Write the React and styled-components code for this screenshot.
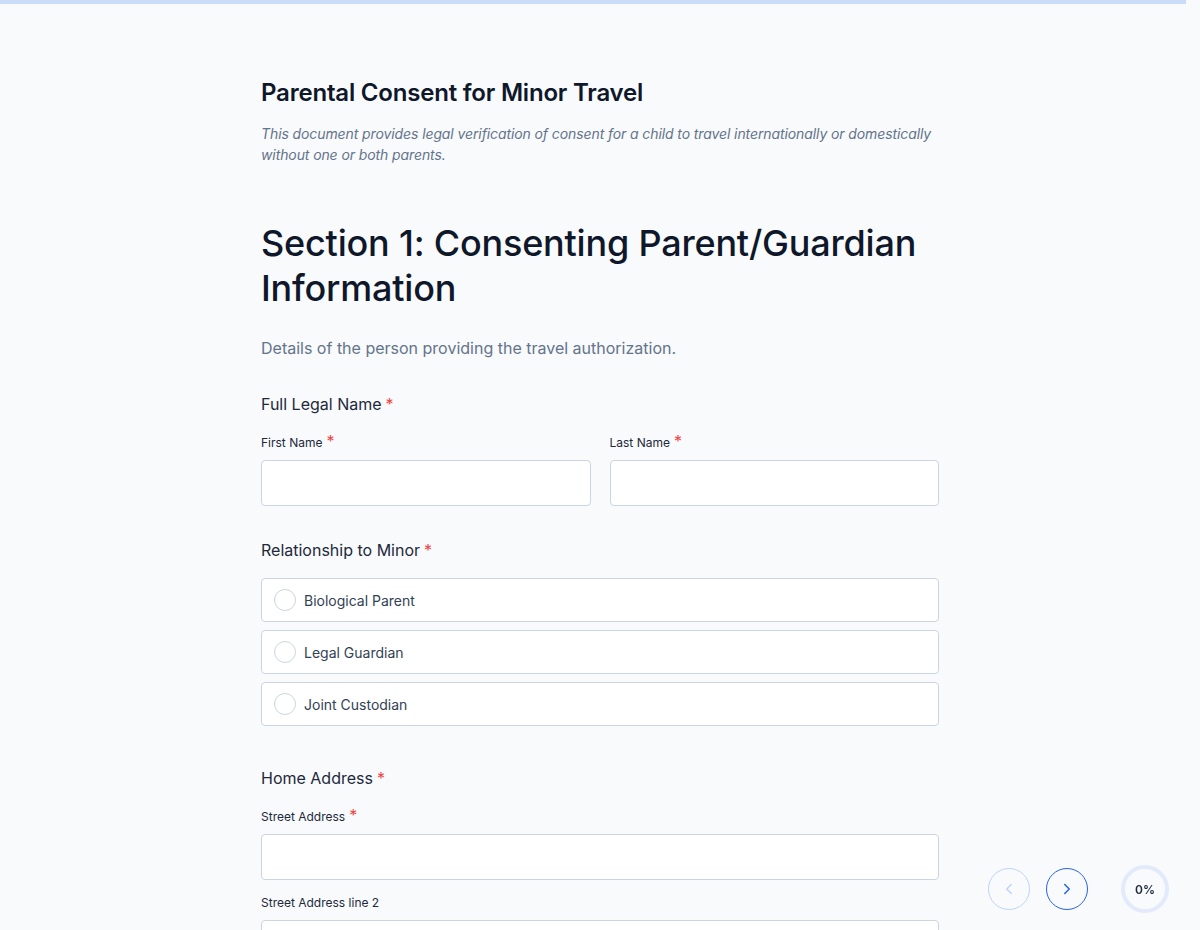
import React from 'react';
import styled, { createGlobalStyle } from 'styled-components';
import { ChevronLeft, ChevronRight } from 'lucide-react';

const Global = createGlobalStyle`
  html,body{margin:0;padding:0;background:#f8fafc;}
  body{font-family:Inter,"Noto Sans",sans-serif;color:#0f172a;-webkit-font-smoothing:antialiased;}
  *{box-sizing:border-box;}
`;

const TopBar = styled.div`
  position:fixed;top:0;left:0;height:4px;width:calc(100% - 14px);background:#cbdcf9;
`;

const Page = styled.main`
  min-height:100vh;padding:77px 0 60px;
`;

const Column = styled.div`
  width:678px;margin:0 auto;
`;

const Title = styled.h1`
  margin:0;font-size:24px;line-height:32px;font-weight:600;color:#0f172a;letter-spacing:-.2px;
`;

const Lead = styled.p`
  margin:14px 0 0;font-size:14px;line-height:21px;font-style:italic;color:#64748b;letter-spacing:-.1px;
`;

const SectionTitle = styled.h2`
  margin:56px 0 0;font-size:36px;line-height:45px;font-weight:500;color:#0f172a;letter-spacing:-.2px;
`;

const SectionNote = styled.p`
  margin:25px 0 0;font-size:16px;line-height:24px;color:#64748b;
`;

const Field = styled.div`
  margin-top:${p => p.$top}px;
`;

const FieldLabel = styled.div`
  font-size:16px;line-height:24px;color:#1e293b;
`;

const Star = styled.span`
  color:#ef4444;margin-left:4px;
`;

const SubLabel = styled.div`
  font-size:12px;line-height:18px;color:#1e293b;margin-bottom:8px;
  span{font-size:16px;line-height:12px;}
`;

const Row = styled.div`
  display:grid;grid-template-columns:1fr 1fr;gap:19px;margin-top:${p => p.$top || 0}px;
`;

const Block = styled.div`
  margin-top:${p => p.$top}px;
`;

const Input = styled.input`
  display:block;width:100%;height:46px;border:1px solid #cbd5e1;border-radius:4px;background:#fff;
  padding:0 12px;font:inherit;font-size:14px;
`;

const Stack = styled.div`
  display:flex;flex-direction:column;gap:8px;margin-top:16px;
`;

const Option = styled.label`
  display:flex;align-items:center;gap:8px;height:44px;padding:0 12px;background:#fff;
  border:1px solid #cbd5e1;border-radius:4px;font-size:14px;color:#334155;cursor:pointer;
`;

const Radio = styled.span`
  width:22px;height:22px;border-radius:50%;border:1px solid #cbd5e1;background:#fff;flex:none;
`;

const Dock = styled.div`
  position:fixed;right:31px;bottom:17px;display:flex;align-items:center;gap:16px;
`;

const NavButton = styled.button`
  width:42px;height:42px;border-radius:50%;background:transparent;display:flex;align-items:center;justify-content:center;padding:0;
  border:1px solid ${p => (p.$off ? '#bfd3fb' : '#2563eb')};
  color:${p => (p.$off ? '#bfd3fb' : '#2563eb')};
`;

const Progress = styled.div`
  width:48px;height:48px;border-radius:50%;border:4px solid #e2eafb;margin-left:17px;
  display:flex;align-items:center;justify-content:center;font-size:12px;font-weight:600;color:#1e293b;
`;

function Req() {
  return <Star>*</Star>;
}

const options = ['Biological Parent', 'Legal Guardian', 'Joint Custodian'];

export default function App() {
  return (
    <>
      <Global />
      <TopBar />
      <Page>
        <Column>
          <Title>Parental Consent for Minor Travel</Title>
          <Lead>
            This document provides legal verification of consent for a child to travel internationally or domestically without one or both parents.
          </Lead>
          <SectionTitle>Section 1: Consenting Parent/Guardian Information</SectionTitle>
          <SectionNote>Details of the person providing the travel authorization.</SectionNote>

          <Field $top={32}>
            <FieldLabel>Full Legal Name<Req /></FieldLabel>
            <Row $top={18}>
              <div>
                <SubLabel>First Name<Req /></SubLabel>
                <Input />
              </div>
              <div>
                <SubLabel>Last Name<Req /></SubLabel>
                <Input />
              </div>
            </Row>
          </Field>

          <Field $top={32}>
            <FieldLabel>Relationship to Minor<Req /></FieldLabel>
            <Stack>
              {options.map(o => (
                <Option key={o}><Radio />{o}</Option>
              ))}
            </Stack>
          </Field>

          <Field $top={40}>
            <FieldLabel>Home Address<Req /></FieldLabel>
            <Block $top={18}>
              <SubLabel>Street Address<Req /></SubLabel>
              <Input />
            </Block>
            <Block $top={14}>
              <SubLabel>Street Address line 2</SubLabel>
              <Input />
            </Block>
          </Field>
        </Column>
      </Page>
      <Dock>
        <NavButton $off><ChevronLeft size={18} strokeWidth={2} /></NavButton>
        <NavButton><ChevronRight size={18} strokeWidth={2} /></NavButton>
        <Progress>0%</Progress>
      </Dock>
    </>
  );
}
